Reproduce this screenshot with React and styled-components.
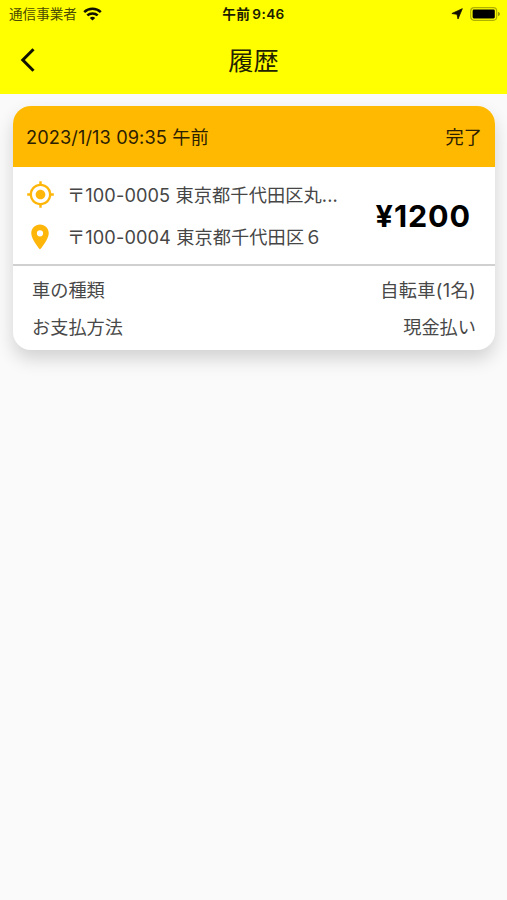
import React from "react";
import styled, { createGlobalStyle } from "styled-components";
import { MdMyLocation, MdLocationOn } from "react-icons/md";

const GlobalStyle = createGlobalStyle`
  * { box-sizing: border-box; }
  body {
    margin: 0;
    background: #fafafa;
    font-family: Inter, "Noto Sans CJK JP", sans-serif;
    color: #1c1c1c;
  }
`;

const Screen = styled.div`
  min-height: 900px;
  background: #fafafa;
`;

const Header = styled.header`
  height: 94px;
  background: #ffff00;
`;

const StatusBar = styled.div`
  height: 27px;
  display: grid;
  grid-template-columns: 1fr auto 1fr;
  align-items: center;
  padding: 0 7px 0 9px;
`;

const Carrier = styled.div`
  display: flex;
  align-items: center;
  gap: 6px;
  font-size: 13.6px;
  line-height: 20px;
  color: #4a4a00;
`;

const Clock = styled.div`
  display: flex;
  gap: 2px;
  font-size: 13.6px;
  line-height: 20px;
  font-weight: 600;
  letter-spacing: 0.4px;
  margin-right: 2px;
  color: #1c1c00;
`;

const StatusIcons = styled.div`
  display: flex;
  justify-content: flex-end;
  align-items: center;
  gap: 7px;
`;

const NavBar = styled.nav`
  height: 65px;
  display: grid;
  grid-template-columns: 56px 1fr 56px;
  align-items: center;
`;

const BackButton = styled.button`
  display: flex;
  border: 0;
  padding: 0 0 0 20px;
  background: none;
  color: #111100;
`;

const Title = styled.h1`
  margin: 2px 0 0;
  text-align: center;
  font-size: 25.2px;
  line-height: 36px;
  font-weight: 400;
  color: #222200;
`;

const Card = styled.article`
  margin: 12px 12px 0 13px;
  height: 244px;
  border-radius: 18px;
  overflow: hidden;
  background: #fff;
  box-shadow: 0 9px 18px rgba(0, 0, 0, 0.16);
`;

const CardHeader = styled.div`
  height: 61px;
  padding: 0 13px;
  display: flex;
  align-items: center;
  justify-content: space-between;
  background: #ffb900;
  font-size: 18.2px;
  line-height: 28px;
  color: #2b2000;
`;

const DateText = styled.span`
  letter-spacing: 0.1px;
`;

const Trip = styled.div`
  height: 97px;
  display: flex;
  align-items: center;
  padding: 0 24px 0 12px;
`;

const Route = styled.div`
  flex: 1;
  display: flex;
  flex-direction: column;
`;

const Stop = styled.div`
  height: 42px;
  display: flex;
  align-items: center;
  gap: 12px;
  color: #ffb60a;
`;

const IconSlot = styled.span`
  width: 30px;
  display: flex;
  justify-content: center;
`;

const Address = styled.span`
  font-size: 18.2px;
  line-height: 28px;
  letter-spacing: 0.1px;
  color: #464646;
  white-space: nowrap;
`;

const Price = styled.strong`
  font-size: 30.5px;
  line-height: 40px;
  font-weight: 650;
  letter-spacing: 0.9px;
  color: #000;
`;

const Details = styled.dl`
  margin: 0;
  border-top: 2px solid #d0d0d0;
  padding: 5px 19px 0;
`;

const Detail = styled.div`
  height: 37.5px;
  display: flex;
  align-items: center;
  justify-content: space-between;
  font-size: 18.2px;
  line-height: 28px;
  color: #484848;
`;

const Term = styled.dt``;

const Value = styled.dd`
  margin: 0;
  letter-spacing: ${({ $spacing = 0 }) => $spacing}px;
`;

const WifiIcon = () => (
  <svg width="19" height="14" viewBox="0 0 19 14" fill="none" stroke="#111100" strokeWidth="2.5">
    <path d="M1.2 5.2C5.8.7 13.2.7 17.8 5.2" />
    <path d="M4.3 8.4C7.2 5.7 11.8 5.7 14.7 8.4" />
    <path d="M9.5 13.6 6.8 10.9Q9.5 8.8 12.2 10.9Z" fill="#111100" stroke="none" />
  </svg>
);

const LocationArrow = () => (
  <svg width="12" height="12" viewBox="0 0 12 12" fill="#111100" stroke="#111100" strokeWidth=".8" strokeLinejoin="round">
    <path d="M11.3.7 7 11 6 6.3.9 5.5Z" />
  </svg>
);

const BatteryIcon = () => (
  <svg width="30" height="14" viewBox="0 0 30 14">
    <rect x=".7" y=".7" width="26" height="12.6" rx="3.5" fill="none" stroke="#b0b000" strokeWidth="1.2" />
    <rect x="2.6" y="2.6" width="22.2" height="8.8" rx="1.3" fill="#000" />
    <path d="M28 4.7q2 1 2 2.3t-2 2.3z" fill="#9c9c00" />
  </svg>
);

const BackIcon = () => (
  <svg width="16" height="26" viewBox="0 0 16 26" fill="none" stroke="currentColor" strokeWidth="3">
    <path d="M13.5 2.2 2.8 13l10.7 10.8" />
  </svg>
);

export default function App() {
  return (
    <Screen>
      <GlobalStyle />
      <Header>
        <StatusBar>
          <Carrier>通信事業者<WifiIcon /></Carrier>
          <Clock><span>午前</span><span>9:46</span></Clock>
          <StatusIcons><LocationArrow /><BatteryIcon /></StatusIcons>
        </StatusBar>
        <NavBar>
          <BackButton aria-label="戻る"><BackIcon /></BackButton>
          <Title>履歴</Title>
        </NavBar>
      </Header>
      <Card>
        <CardHeader>
          <DateText>2023/1/13 09:35 午前</DateText>
          <span>完了</span>
        </CardHeader>
        <Trip>
          <Route>
            <Stop>
              <IconSlot><MdMyLocation size={29} /></IconSlot>
              <Address>〒100-0005 東京都千代田区丸...</Address>
            </Stop>
            <Stop>
              <IconSlot><MdLocationOn size={30} /></IconSlot>
              <Address>〒100-0004 東京都千代田区６</Address>
            </Stop>
          </Route>
          <Price>¥1200</Price>
        </Trip>
        <Details>
          <Detail><Term>車の種類</Term><Value $spacing={0.35}>自転車(1名)</Value></Detail>
          <Detail><Term>お支払方法</Term><Value>現金払い</Value></Detail>
        </Details>
      </Card>
    </Screen>
  );
}
